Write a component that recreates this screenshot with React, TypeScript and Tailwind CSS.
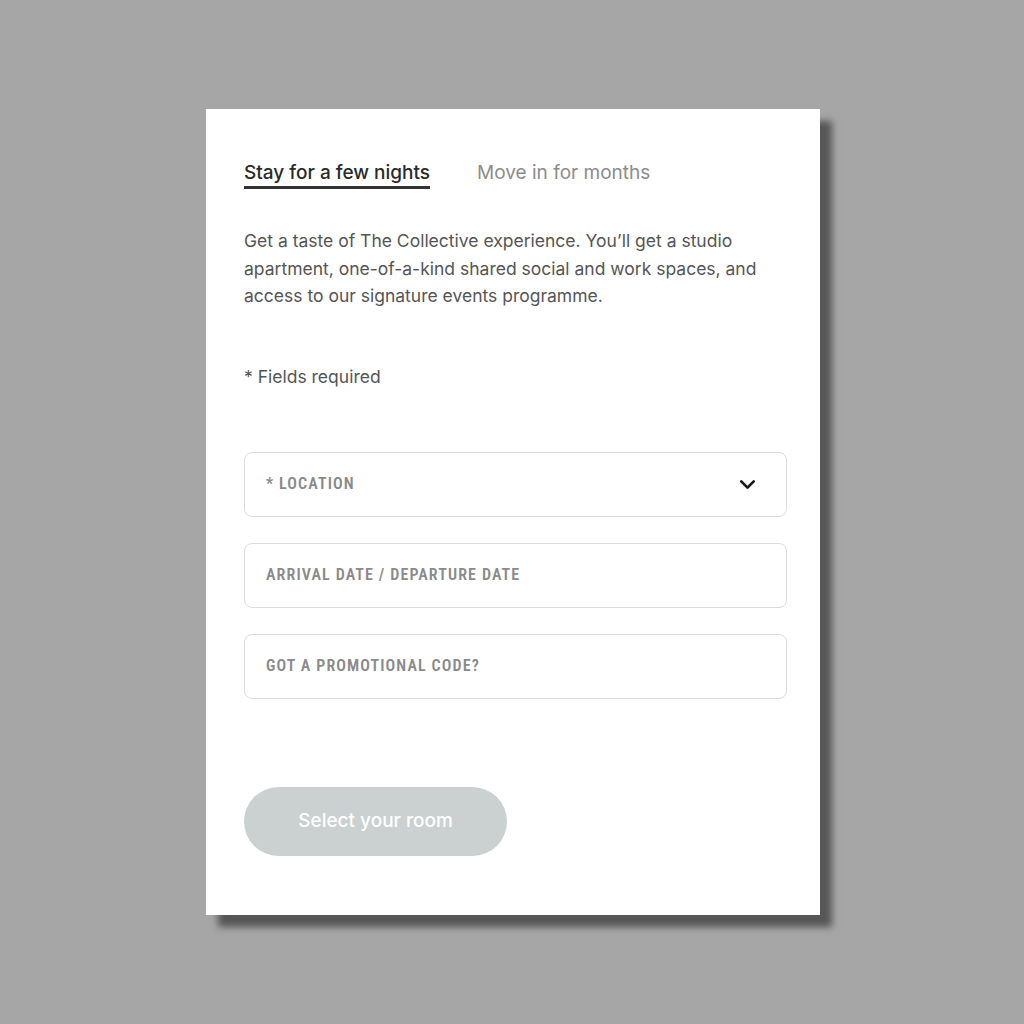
import React from 'react';
import { ChevronDown } from 'lucide-react';

function Field({ label, chevron }: { label: string; chevron?: boolean }) {
  return (
    <div className="h-[65px] rounded-lg border border-[#dcdcdc] bg-white flex items-center justify-between pl-[21px] pr-[26px]">
      <span className="font-['Liberation_Sans_Narrow','Roboto_Condensed',Roboto,sans-serif] text-[16px] font-semibold text-[#8a8a8a] tracking-[0.07em]">
        {label}
      </span>
      {chevron && <ChevronDown size={25} strokeWidth={2.6} className="text-[#1a1a1a]" />}
    </div>
  );
}

export default function App() {
  return (
    <div className="min-h-screen w-full bg-[#a6a6a6] pt-[109px] pl-[206px] font-['Inter',sans-serif]">
      {/* Booking card */}
      <div className="w-[614px] bg-white shadow-[12px_12px_7px_#565656] pl-[38px] pr-[33px] pt-[52px] pb-[59px]">
        {/* Tabs */}
        <div className="flex gap-[47px] text-[19px] leading-[24px]">
          <span className="text-[#2a2a2a] font-medium border-b-[3px] border-[#333] pb-[1px]">Stay for a few nights</span>
          <span className="text-[#8c8c8c]">Move in for months</span>
        </div>

        <p className="mt-[38px] text-[17.5px] leading-[27.5px] text-[#555] pr-[10px]">
          Get a taste of The Collective experience. You’ll get a studio apartment, one-of-a-kind shared social and work spaces, and access to our signature events programme.
        </p>

        <p className="mt-[53px] text-[17.5px] leading-[27px] text-[#555]">* Fields required</p>

        {/* Form fields */}
        <div className="mt-[62px] flex flex-col gap-[26px]">
          <Field label="* LOCATION" chevron />
          <Field label="ARRIVAL DATE / DEPARTURE DATE" />
          <Field label="GOT A PROMOTIONAL CODE?" />
        </div>

        <button className="mt-[88px] w-[263px] h-[69px] rounded-full bg-[#cbd1d1] text-white text-[19px] font-medium">
          Select your room
        </button>
      </div>
    </div>
  );
}
